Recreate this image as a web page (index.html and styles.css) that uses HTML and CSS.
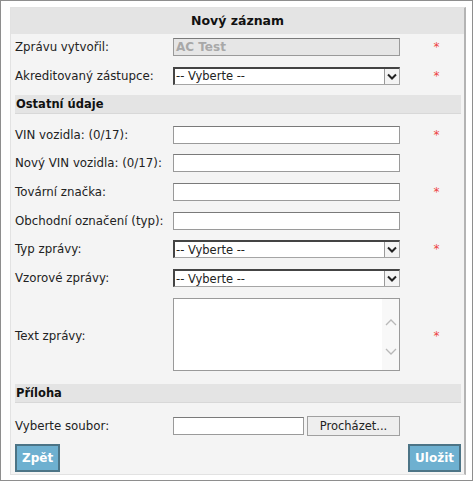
FILE: index.html
```html
<!DOCTYPE html>
<html lang="cs">
<head>
  <meta charset="UTF-8" />
  <title>Nový záznam</title>
  <link rel="stylesheet" href="styles.css">
</head>
<body>
  <div class="frame">
    <div class="panel">
      <div class="panel-title">Nový záznam</div>

      <div class="rows first">
        <label class="lbl">Zprávu vytvořil:</label>
        <div class="field disabled">AC Test</div>
        <span class="req">*</span>

        <label class="lbl">Akreditovaný zástupce:</label>
        <div class="select"><span>-- Vyberte --</span><i class="arrow"></i></div>
        <span class="req">*</span>
      </div>

      <div class="section">Ostatní údaje</div>

      <div class="rows">
        <label class="lbl">VIN vozidla: (0/17):</label>
        <div class="field"></div>
        <span class="req">*</span>

        <label class="lbl">Nový VIN vozidla: (0/17):</label>
        <div class="field"></div>
        <span class="req"></span>

        <label class="lbl">Tovární značka:</label>
        <div class="field"></div>
        <span class="req">*</span>

        <label class="lbl">Obchodní označení (typ):</label>
        <div class="field"></div>
        <span class="req"></span>

        <label class="lbl">Typ zprávy:</label>
        <div class="select"><span>-- Vyberte --</span><i class="arrow"></i></div>
        <span class="req">*</span>

        <label class="lbl">Vzorové zprávy:</label>
        <div class="select"><span>-- Vyberte --</span><i class="arrow"></i></div>
        <span class="req"></span>

        <label class="lbl tall">Text zprávy:</label>
        <div class="textarea">
          <div class="scroll">
            <svg width="12" height="8" viewBox="0 0 12 8"><path d="M1 7 L6 2 L11 7" fill="none" stroke="#b8b8b8" stroke-width="1.3"/></svg>
            <svg width="12" height="8" viewBox="0 0 12 8"><path d="M1 1 L6 6 L11 1" fill="none" stroke="#b8b8b8" stroke-width="1.3"/></svg>
          </div>
        </div>
        <span class="req tall">*</span>
      </div>

      <div class="section">Příloha</div>

      <div class="rows file-row">
        <label class="lbl">Vyberte soubor:</label>
        <div class="file">
          <div class="field"></div>
          <div class="browse">Procházet...</div>
        </div>
        <span class="req"></span>
      </div>

      <div class="actions">
        <button class="btn">Zpět</button>
        <button class="btn">Uložit</button>
      </div>
    </div>
  </div>
</body>
</html>
```

FILE: styles.css
```css
/* Base */
body {
  margin: 0;
  font-family: "DejaVu Sans", Verdana, sans-serif;
  font-size: 11.8px;
  color: #222;
  background: #fff;
}
.frame {
  width: 473px;
  height: 481px;
  box-sizing: border-box;
  border: 1px solid #8e8e8e;
  padding: 6px 6px 5px 9px;
}
.panel {
  height: 100%;
  box-sizing: border-box;
  background: #f4f4f4;
  border: 1px solid #e2e2e2;
  border-right: 2px solid #b4b4b4;
  padding: 0 1px 0 4px;
}
.panel-title {
  margin-left: -4px;
  margin-right: -1px;
  height: 26px;
  line-height: 25px;
  background: #e4e4e4;
  text-align: center;
  font-weight: bold;
  font-size: 12.5px;
  color: #111;
}

/* Form rows */
.rows {
  display: grid;
  grid-template-columns: 158px 227px 1fr;
  grid-auto-rows: 18px;
  row-gap: 10.7px;
  align-items: center;
  margin: 12px 0 11px;
}
.rows.first {
  margin: 4px 0 10px;
}
.lbl {
  white-space: nowrap;
  color: #222;
}
.lbl.tall,
.req.tall {
  grid-row: span 3;
}
.req {
  color: #ee4444;
  text-align: center;
  padding-left: 10px;
  font-size: 12px;
  line-height: 14px;
}
.field {
  height: 18px;
  box-sizing: border-box;
  background: #fff;
  border: 1px solid #9a9a9a;
  border-top-color: #7a7a7a;
}
.field.disabled {
  background: #e6e6e6;
  color: #a8a8a8;
  font-size: 12px;
  font-weight: bold;
  line-height: 16px;
  padding-left: 2px;
}
.select {
  height: 18px;
  box-sizing: border-box;
  background: #fff;
  border: 1px solid #a5a5a5;
  border-top: 2px solid #444;
  border-left: 2px solid #444;
  display: flex;
  align-items: center;
  justify-content: space-between;
  padding-left: 1px;
  font-size: 11.5px;
}
.arrow {
  width: 15px;
  height: 15px;
  box-sizing: border-box;
  border-left: 1px solid #9a9a9a;
  background: #f4f4f4 url("data:image/svg+xml;utf8,<svg xmlns='http://www.w3.org/2000/svg' width='15' height='15'><path d='M3.5 5.5 L7.5 9.5 L11.5 5.5' fill='none' stroke='%23222' stroke-width='2'/></svg>") no-repeat center;
}
.rows .textarea {
  grid-row: span 3;
  height: 73px;
  align-self: start;
  box-sizing: border-box;
  background: #fff;
  border: 1px solid #9a9a9a;
  display: flex;
  justify-content: flex-end;
}
.scroll {
  width: 17px;
  background: #f8f8f8;
  display: flex;
  flex-direction: column;
  justify-content: space-between;
  align-items: center;
  padding: 19px 0 14px;
}

/* Section headers */
.section {
  height: 18px;
  line-height: 18px;
  background: #e4e4e4;
  border-bottom: 1px solid #d8d8d8;
  font-weight: bold;
  font-size: 11.5px;
  color: #111;
  padding-left: 1px;
  margin-right: 2px;
}

/* File input */
.file-row {
  margin: 14px 0 9px;
}
.file {
  display: flex;
  gap: 3px;
  align-items: center;
}
.file .field {
  width: 131px;
}
.browse {
  flex: 1;
  height: 20px;
  box-sizing: border-box;
  border: 1px solid #a0a0a0;
  background: #eeeeee;
  text-align: center;
  line-height: 18px;
  font-size: 11.5px;
  color: #222;
}

/* Buttons */
.actions {
  display: flex;
  justify-content: space-between;
  padding-right: 2px;
}
.btn {
  height: 28px;
  box-sizing: border-box;
  background: #6eb0d0;
  border: 2px solid #4c7486;
  color: #fff;
  font-family: "DejaVu Sans", Verdana, sans-serif;
  font-weight: bold;
  font-size: 12px;
  padding: 0 5px;
}
```
